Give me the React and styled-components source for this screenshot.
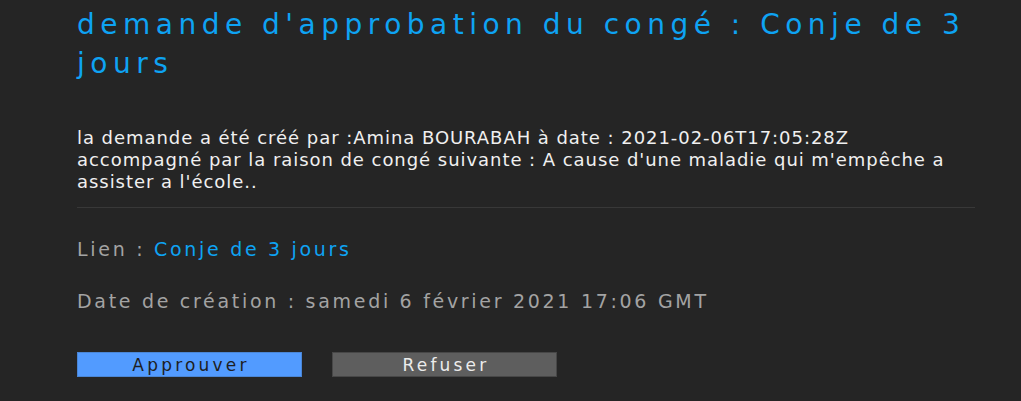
import styled, { createGlobalStyle } from 'styled-components';

const GlobalStyle = createGlobalStyle`
    html, body {
        margin: 0;
        padding: 0;
        background-color: #252525;
    }
    body {
        font-family: "DejaVu Sans", "Noto Sans", sans-serif;
    }
`

export default function App() {
    return (
        <>
        <GlobalStyle/>
        <Page>
            <Title>demande d'approbation du congé : Conje de 3<br/>jours</Title>

            <Description>
                la demande a été créé par :Amina BOURABAH à date : 2021-02-06T17:05:28Z<br/>
                accompagné par la raison de congé suivante : A cause d'une maladie qui m'empêche a<br/>
                assister a l'école..
            </Description>

            <Divider/>

            <Info>
                Lien : <Link href="#">Conje de 3 jours</Link>
            </Info>
            <Info>Date de création : samedi 6 février 2021 17:06 GMT</Info>

            <Buttons>
                <ActionButton $primary>Approuver</ActionButton>
                <ActionButton>Refuser</ActionButton>
            </Buttons>
        </Page>
        </>
    );
}

const Page = styled.div`
    width: 898px;
    padding-left: 77px;
    height: 401px;
    overflow: hidden;
`

const Title = styled.h1`
    margin: 5px 0 0 0;
    font-size: 28px;
    line-height: 39px;
    font-weight: 400;
    letter-spacing: 5.5px;
    white-space: nowrap;
    color: #0ea3f3;
`

const Description = styled.p`
    margin: 44px 0 0 0;
    font-size: 18px;
    line-height: 22px;
    letter-spacing: 0.95px;
    white-space: nowrap;
    color: #f0f0f0;
`

const Divider = styled.div`
    margin-top: 14px;
    height: 1px;
    background-color: #383838;
`

const Info = styled.p`
    margin: 28px 0 0 0;
    font-size: 19px;
    line-height: 26px;
    letter-spacing: 2.7px;
    color: #a3a3a3;

    & + & {
        margin-top: 26px;
    }
`

const Link = styled.a`
    color: #0ea3f3;
    text-decoration: none;
`

const Buttons = styled.div`
    display: flex;
    gap: 30px;
    margin-top: 38px;
`

const ActionButton = styled.button`
    width: 225px;
    height: 25px;
    padding: 0 0 0 3px;
    box-sizing: border-box;
    border: 1px solid ${p => p.$primary ? '#4a86d6' : '#474747'};
    background-color: ${p => p.$primary ? '#529bff' : '#5e5e5e'};
    color: ${p => p.$primary ? '#1e1e1e' : '#ececec'};
    font-family: "DejaVu Sans", "Noto Sans", sans-serif;
    font-size: 17px;
    line-height: 22px;
    letter-spacing: 3.2px;
`
